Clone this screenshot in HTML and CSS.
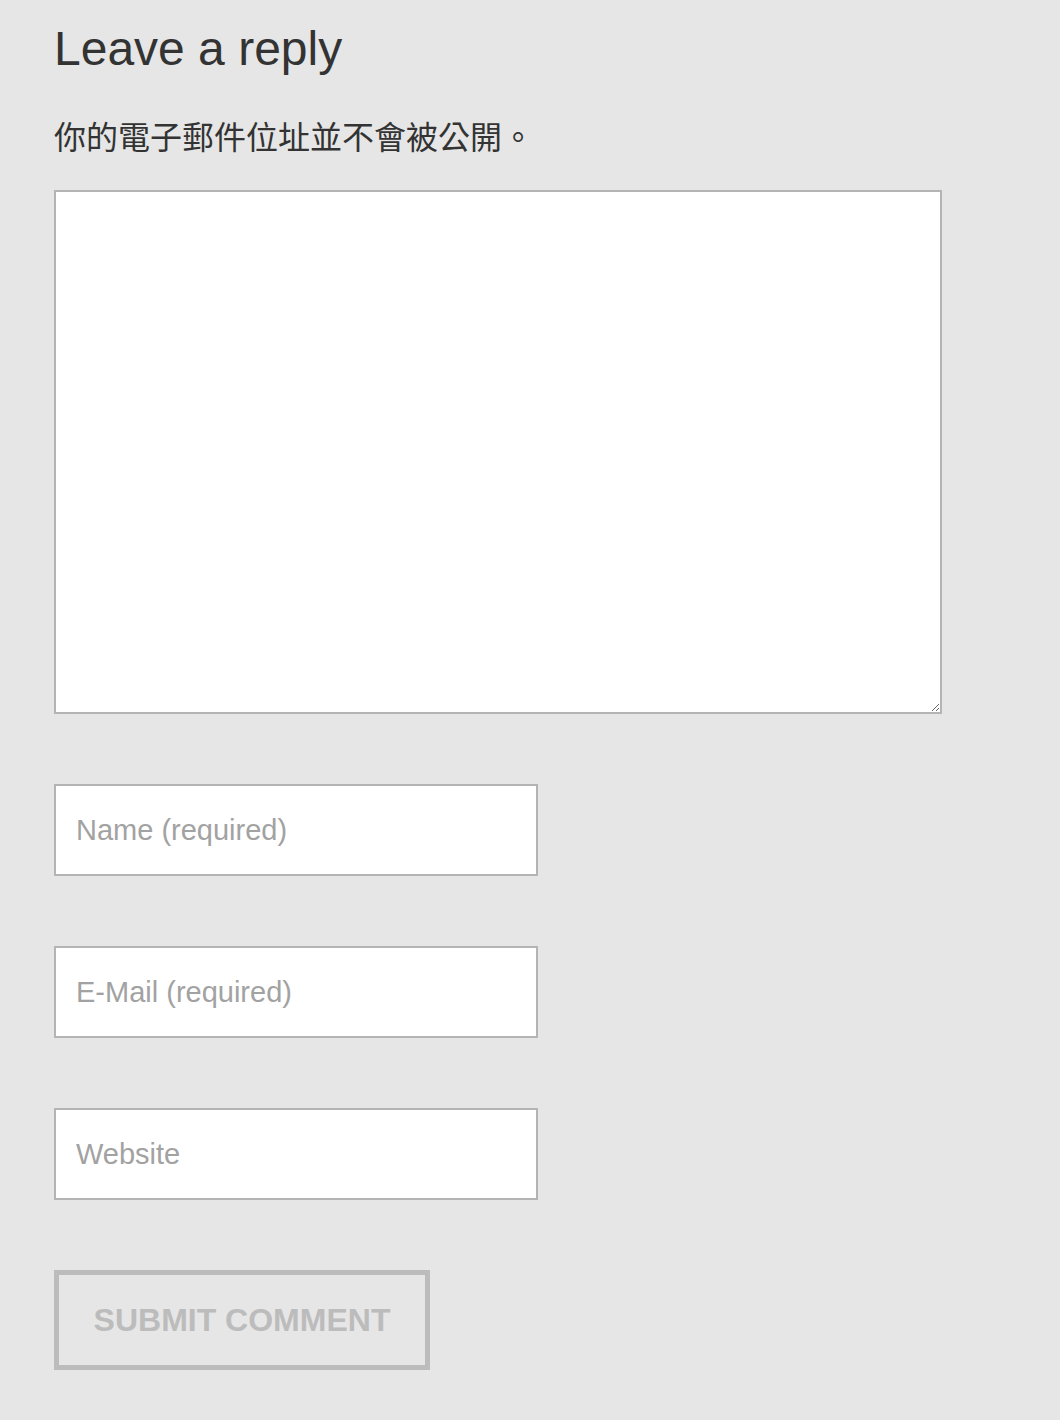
FILE: index.html
```html
<!DOCTYPE html>
<html lang="zh-Hant">
<head>
    <meta charset="UTF-8">
    <meta name="viewport" content="width=device-width, initial-scale=1.0">
    <title>Leave a reply</title>
    <link rel="stylesheet" href="styles.css">
</head>
<body>
    <div class="respond">
        <h3 class="reply-title">Leave a reply</h3>
        <p class="comment-notes">你的電子郵件位址並不會被公開。</p>

        <form class="comment-form">
            <textarea class="comment-text" name="comment"></textarea>
            <input class="field" type="text" name="author" placeholder="Name (required)">
            <input class="field" type="email" name="email" placeholder="E-Mail (required)">
            <input class="field" type="url" name="url" placeholder="Website">
            <button class="submit" type="submit">Submit Comment</button>
        </form>
    </div>
</body>
</html>
```

FILE: styles.css
```css
body {
    margin: 0;
    padding: 20px 54px 40px;
    background-color: #e6e6e6;
    font-family: "Liberation Sans", "Noto Sans CJK TC", sans-serif;
    color: #333;
}
.reply-title {
    margin: 0;
    font-size: 48px;
    font-weight: 400;
    line-height: 58px;
}
.comment-notes {
    margin: 33px 0 31px;
    font-family: "Noto Sans CJK TC", sans-serif;
    font-size: 32px;
    line-height: 48px;
}
.comment-text,
.field {
    display: block;
    box-sizing: border-box;
    border: 2px solid #b4b4b4;
    border-radius: 0;
    background-color: #fff;
    margin: 0 0 70px;
    outline: none;
}
.comment-text {
    width: 888px;
    height: 524px;
}
.field {
    width: 484px;
    height: 92px;
    padding: 0 20px;
    font-family: "Liberation Sans", sans-serif;
    font-size: 29px;
    color: #333;
}
.field::placeholder {
    color: #a2a2a2;
}
.submit {
    display: block;
    box-sizing: border-box;
    width: 376px;
    height: 100px;
    border: 5px solid #bcbcbc;
    background: transparent;
    color: #bcbcbc;
    font-family: "Liberation Sans", sans-serif;
    font-size: 32px;
    font-weight: 700;
    text-transform: uppercase;
    padding: 0;
}
```
